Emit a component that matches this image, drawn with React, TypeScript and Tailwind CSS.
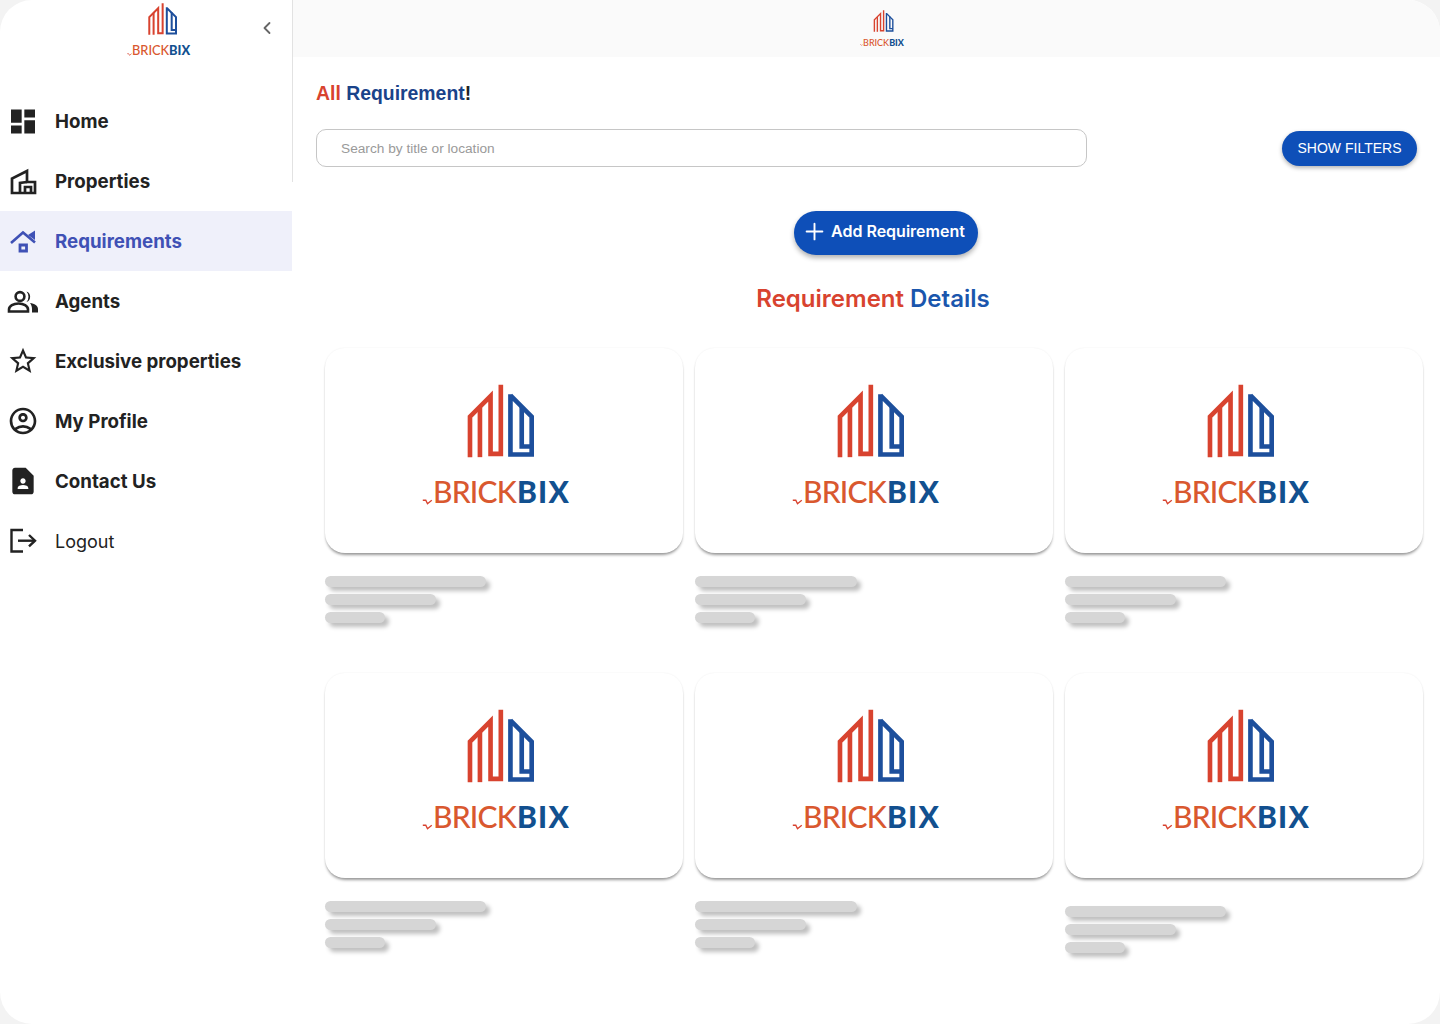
import { ChevronLeft, Plus } from "lucide-react"
import { MdDashboard, MdOutlineStarBorder, MdOutlineAccountCircle, MdContactPage } from "react-icons/md"

const PropertiesIcon = () => (
  <svg viewBox="0 0 32 32" className="h-8 w-8" fill="none" stroke="currentColor" strokeWidth="2.7">
    <path d="M5 28V13.500L20 6v11h8v11z" strokeLinejoin="miter" />
    <path d="M13 28V18l7-1" />
    <path d="M18 28v-6h6v6" />
  </svg>
)

const RequirementsIcon = () => (
  <svg viewBox="0 0 32 32" className="h-8 w-8" fill="none" stroke="currentColor" strokeWidth="2.6">
    <path d="M4 18L16 7.500l12 10" />
    <path d="M21 10l7-4.500V15z" fill="currentColor" stroke="none" />
    <path d="M13 20h6.500v6H13z" strokeWidth="2.800" />
  </svg>
)

const AgentsIcon = () => (
  <svg viewBox="0 0 32 32" className="h-8 w-8" fill="none" stroke="currentColor" strokeWidth="2.6">
    <circle cx="13" cy="11.500" r="4.400" />
    <path d="M2 26.500v-2c0-3.500 4.500-6 9.500-6s9.500 2.500 9.500 6v2z" />
    <path d="M19.500 6.500a5.600 5.600 0 0 1 0 10.500a8 8 0 0 0 0-10.500z" fill="currentColor" stroke="none" />
    <path d="M23 18c4.500.5 8 2.500 8 6v3.500h-6V24c0-2.500-.8-4.500-2-6z" fill="currentColor" stroke="none" />
  </svg>
)

const LogoutIcon = () => (
  <svg viewBox="0 0 32 32" className="h-8 w-8" fill="none" stroke="currentColor" strokeWidth="2.4">
    <path d="M16 5H4.500v21.500H16" />
    <path d="M11 15.700h17" />
    <path d="M22 10l6 5.700-6 5.700" />
  </svg>
)

const nav = [
  { label: "Home", icon: <MdDashboard size={33} />, text: "pt-[2px] text-[18.7px] font-bold", row: "text-[#222222]" },
  { label: "Properties", icon: <PropertiesIcon />, text: "pt-[2px] text-[18.7px] font-bold", row: "text-[#222222]" },
  { label: "Requirements", icon: <RequirementsIcon />, text: "pt-[2px] text-[18.7px] font-bold", row: "bg-[#eff0fa] text-[#3f51b5]" },
  { label: "Agents", icon: <AgentsIcon />, text: "pt-[2px] text-[18.7px] font-bold", row: "text-[#222222]" },
  { label: "Exclusive properties", icon: <MdOutlineStarBorder size={32} />, text: "pt-[2px] text-[18.7px] font-bold", row: "text-[#222222]" },
  { label: "My Profile", icon: <MdOutlineAccountCircle size={32} />, text: "pt-[2px] text-[18.7px] font-bold", row: "text-[#222222]" },
  { label: "Contact Us", icon: <MdContactPage size={32} />, text: "pt-[2px] text-[18.7px] font-bold", row: "text-[#222222]" },
  { label: "Logout", icon: <LogoutIcon />, text: "text-[18px] font-normal", row: "text-[#222222]" },
]

const LogoMark = ({ className }: { className: string }) => (
  <svg viewBox="170 42 202 222" className={className} fill="none" strokeWidth="14">
    <g stroke="#d8432f">
      <path d="M179 262V140L241 78V252H272V44" />
      <path d="M209 262V112" />
    </g>
    <g stroke="#1d4f9c">
      <path d="M301 72V254H365V140L301 76" />
      <path d="M335 108V230H365" />
    </g>
  </svg>
)

const Tick = ({ className }: { className: string }) => (
  <svg viewBox="0 0 12 7" className={className} fill="none" stroke="#d8432f" strokeWidth="1.600">
    <path d="M0.500 1.500h3.500l2 4 5-4" />
  </svg>
)

const CardLogo = () => (
  <div className="flex flex-col items-center pr-[16px]">
    <LogoMark className="ml-[9px] h-[74px] w-[67px]" />
    <div className="mt-[15px] flex items-end font-['Lato',sans-serif] text-[30px] leading-[36px]">
      <Tick className="mb-[4px] h-[6px] w-[11px]" />
      <span className="font-medium tracking-[-0.8px] text-[#d9582f]">BRICK</span>
      <span className="ml-[1px] font-black tracking-[1.200px] text-[#12508f]">BIX</span>
    </div>
  </div>
)

const SideLogo = () => (
  <div className="flex flex-col items-center">
    <LogoMark className="ml-[7px] h-[32px] w-[29px]" />
    <div className="mt-[8px] flex items-end font-['Lato',sans-serif] text-[12.8px] leading-[15px]">
      <Tick className="mb-[2px] h-[3px] w-[5px]" />
      <span className="font-medium text-[#d9582f]">BRICK</span>
      <span className="font-black text-[#12508f]">BIX</span>
    </div>
  </div>
)

const TopLogo = () => (
  <div className="flex flex-col items-center">
    <LogoMark className="ml-[3px] h-[22px] w-[21px]" />
    <div className="mt-[5px] flex items-end font-['Lato',sans-serif] text-[9px] leading-[11px]">
      <Tick className="mb-[2px] h-[2px] w-[3px]" />
      <span className="font-medium text-[#d9582f]">BRICK</span>
      <span className="font-black text-[#12508f]">BIX</span>
    </div>
  </div>
)

const cards = [
  { widths: ["w-[161px]", "w-[111px]", "w-[60px]"], skeleton: "mt-[23px]" },
  { widths: ["w-[162px]", "w-[111px]", "w-[60px]"], skeleton: "mt-[23px]" },
  { widths: ["w-[161px]", "w-[111px]", "w-[60px]"], skeleton: "mt-[23px]" },
  { widths: ["w-[161px]", "w-[111px]", "w-[60px]"], skeleton: "mt-[23px]" },
  { widths: ["w-[162px]", "w-[111px]", "w-[60px]"], skeleton: "mt-[23px]" },
  { widths: ["w-[161px]", "w-[111px]", "w-[60px]"], skeleton: "mt-[28px]" },
]

const Card = ({ widths, skeleton }: { widths: string[]; skeleton: string }) => (
  <div className="h-[275px]">
    <div className="flex h-[205px] justify-center rounded-[20px] bg-white pt-[36px] shadow-[0_3px_3px_-1px_rgba(0,0,0,0.4),0_0_2px_rgba(0,0,0,0.07)]">
      <CardLogo />
    </div>
    <div className={`${skeleton} flex flex-col gap-[7px]`}>
      {widths.map((w) => (
        <div key={w} className={`${w} h-[11px] rounded-full bg-[#d6d6d6] shadow-[4px_4px_4px_rgba(0,0,0,0.25)]`} />
      ))}
    </div>
  </div>
)

export default function App() {
  return (
    <div className="h-[1024px] w-[1440px] overflow-hidden bg-[#f3f3f3] font-['Inter',sans-serif]">
      <div className="flex h-full overflow-hidden rounded-[32px] bg-white">
        <aside className="relative w-[293px] shrink-0">
          <div className="absolute right-0 top-0 h-[182px] w-px bg-[#e2e2e2]" />
          <div className="flex h-[91px] items-start">
            <div className="ml-[127px] mt-[3px]">
              <SideLogo />
            </div>
            <ChevronLeft className="ml-auto mr-[16px] mt-[18px] text-[#666666]" size={20} strokeWidth={2.2} />
          </div>
          <nav className="flex w-[292px] flex-col">
            {nav.map((item) => (
              <div key={item.label} className={`flex h-[60px] items-center gap-[16px] pl-[7px] ${item.row}`}>
                <span className="flex h-8 w-8 items-center justify-center">{item.icon}</span>
                <span className={item.text}>{item.label}</span>
              </div>
            ))}
          </nav>
        </aside>

        <main className="flex min-w-0 flex-1 flex-col">
          <header className="flex h-[57px] shrink-0 items-center justify-center bg-[#fafafa] pl-[31px]">
            <TopLogo />
          </header>

          <h1 className="ml-[23px] mt-[24px] font-['Liberation_Sans',sans-serif] text-[19.4px] font-bold leading-[24px] text-[#222222]">
            <span className="text-[#d8432f]">All</span> <span className="text-[#1a438a]">Requirement</span>!
          </h1>

          <div className="mt-[24px] flex items-center justify-between pl-[23px] pr-[23px]">
            <input
              placeholder="Search by title or location"
              className="h-[38px] w-[771px] rounded-[10px] border border-[#c6c6c6] pl-[24px] font-['Liberation_Sans',sans-serif] text-[13.7px] outline-none placeholder:text-[#9a9a9a]"
            />
            <button className="h-[35px] w-[135px] rounded-full bg-[#0e4fb8] font-['Liberation_Sans',sans-serif] text-[14px] font-medium text-white shadow-[0_2px_4px_rgba(0,0,0,0.3)]">
              SHOW FILTERS
            </button>
          </div>

          <div className="mt-[44px] flex justify-center pl-[39px]">
            <button className="flex h-[44px] w-[184px] items-center gap-[3px] rounded-full bg-[#0e4fb8] pb-[4px] pl-[7px] text-[16px] font-semibold text-white shadow-[0_3px_5px_rgba(0,0,0,0.3)]">
              <Plus size={27} strokeWidth={1.7} />
              Add Requirement
            </button>
          </div>

          <h2 className="mt-[29px] pl-[13px] text-center text-[24px] font-semibold leading-[30px] text-[#d8432f]">
            Requirement <span className="text-[#1a56ad]">Details</span>
          </h2>

          <div className="mt-[34px] grid grid-cols-[358px_358px_358px] gap-x-[12px] gap-y-[50px] pl-[32px]">
            {cards.map((c, i) => (
              <Card key={i} widths={c.widths} skeleton={c.skeleton} />
            ))}
          </div>
        </main>
      </div>
    </div>
  )
}
